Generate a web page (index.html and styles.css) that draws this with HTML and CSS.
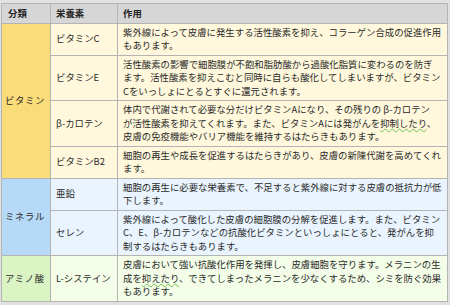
FILE: index.html
```html
<!DOCTYPE html>
<html lang="ja">
<head>
<meta charset="utf-8">
<link rel="stylesheet" href="styles.css">
</head>
<body>
<table class="nutri">
  <colgroup>
    <col class="c-cat">
    <col class="c-name">
    <col class="c-desc">
  </colgroup>
  <thead>
    <tr>
      <th class="h-cat">分類</th>
      <th class="h-name">栄養素</th>
      <th class="h-desc">作用</th>
    </tr>
  </thead>
  <tbody>
    <tr class="vit">
      <td class="cat" rowspan="4">ビタミン</td>
      <td class="name">ビタミンC</td>
      <td class="desc">紫外線によって皮膚に発生する活性酸素を抑え、コラーゲン合成の促進作用<br>もあります。</td>
    </tr>
    <tr class="vit">
      <td class="name">ビタミンE</td>
      <td class="desc">活性酸素の影響で細胞膜が不飽和脂肪酸から過酸化脂質に変わるのを防ぎ<br>ます。活性酸素を抑えこむと同時に自らも酸化してしまいますが、ビタミン<br>Cをいっしょにとるとすぐに還元されます。</td>
    </tr>
    <tr class="vit">
      <td class="name">β-カロテン</td>
      <td class="desc">体内で代謝されて必要な分だけビタミンAになり、その残りの β-カロテン<br>が活性酸素を抑えてくれます。また、ビタミンAには発がんを<span class="spell">抑制したり</span>、<br>皮膚の免疫機能やバリア機能を維持するはたらきもあります。</td>
    </tr>
    <tr class="vit">
      <td class="name">ビタミンB2</td>
      <td class="desc">細胞の再生や成長を促進するはたらきがあり、皮膚の新陳代謝を高めてくれ<br>ます。</td>
    </tr>
    <tr class="min">
      <td class="cat" rowspan="2">ミネラル</td>
      <td class="name">亜鉛</td>
      <td class="desc">細胞の再生に必要な栄養素で、不足すると紫外線に対する皮膚の抵抗力が低<br>下します。</td>
    </tr>
    <tr class="min">
      <td class="name">セレン</td>
      <td class="desc">紫外線によって酸化した皮膚の細胞膜の分解を促進します。また、ビタミン<br>C、E、β-カロテンなどの抗酸化ビタミンといっしょにとると、発がんを抑<br>制するはたらきもあります。</td>
    </tr>
    <tr class="ami">
      <td class="cat">アミノ酸</td>
      <td class="name">L-システイン</td>
      <td class="desc">皮膚において強い抗酸化作用を発揮し、皮膚細胞を守ります。メラニンの生<br>成を<span class="spell">抑えたり</span>、できてしまったメラニンを少なくするため、シミを防ぐ効果<br>もあります。</td>
    </tr>
  </tbody>
</table>
</body>
</html>
```

FILE: styles.css
```css
html, body {
  margin: 0;
  padding: 0;
  background: #e1e1e1;
}
body {
  padding: 3px 0 0 1px;
  font-family: "Noto Sans CJK JP", "Noto Sans", sans-serif;
  font-size: 9.4px;
  line-height: 13.5px;
  color: #2a2a2a;
}
.nutri {
  border-collapse: collapse;
  table-layout: fixed;
  width: 446px;
  border: 1px solid #9c9c9c;
}
.c-cat { width: 49px; }
.c-name { width: 67px; }
.c-desc { width: 330px; }

.nutri th,
.nutri td {
  border: 1px solid #b4b4b4;
  padding: 2px 5px;
  vertical-align: middle;
  text-align: left;
  white-space: nowrap;
}
.nutri th {
  background: #d6d6d6;
  font-weight: bold;
  color: #222;
  padding: 2.5px 5px;
}
.nutri th.h-cat { padding-left: 6px; }

.nutri td.cat {
  padding: 2px 1px 2px 3px;
  letter-spacing: 0.6px;
}
.nutri td.name {
  padding-left: 5px;
  padding-right: 2px;
}
.nutri td.desc {
  padding-left: 5px;
  padding-right: 3px;
}

.vit td { background: #fff8dc; }
.vit td.cat { background: #fadc78; }
.min td { background: #e9f4fe; }
.min td.cat { background: #b5d9f6; }
.ami td { background: #f3fde7; }
.ami td.cat { background: #daf4c4; }

.spell {
  text-decoration: underline wavy #6fbf4a;
  text-decoration-thickness: 1px;
  text-underline-offset: 1px;
}
```
